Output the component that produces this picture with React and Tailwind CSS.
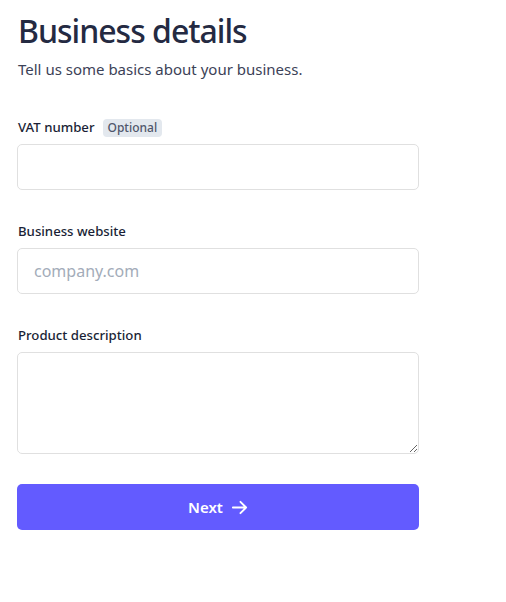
import React from "react";

export default function App() {
  return (
    <div className="min-h-[602px] w-[506px] bg-white pl-[17px] pt-[10px]" style={{ fontFamily: '"Noto Sans", "Open Sans", sans-serif' }}>
      <div className="w-[402px]">
        <h1 className="ml-[1px] text-[32px] font-medium leading-[42px] tracking-[-1px] text-[#242a42]">Business details</h1>
        <p className="ml-[1px] mt-[6px] text-[15px] leading-[22px] text-[#3c4257]">Tell us some basics about your business.</p>

        <div className="mt-[38px]">
          <div className="ml-[1px] flex h-[20px] items-center gap-[8px]">
            <span className="text-[13.2px] font-medium text-[#1a1f36]">VAT number</span>
            <span className="rounded-[4px] bg-[#e3e8ee] px-[5px] text-[12px] font-medium leading-[18px] text-[#4f566b]">Optional</span>
          </div>
          <input className="mt-[6px] block h-[46px] w-[402px] rounded-[5px] border border-[#e0e0e0] px-[16px] text-[16px] outline-none" />
        </div>

        <div className="mt-[31px]">
          <div className="ml-[1px] h-[20px] text-[13.2px] font-medium leading-[20px] text-[#1a1f36]">Business website</div>
          <input placeholder="company.com" className="mt-[7px] block h-[46px] w-[402px] rounded-[5px] border border-[#e0e0e0] px-[16px] text-[16px] outline-none placeholder:text-[#a3acb9]" />
        </div>

        <div className="mt-[31px]">
          <div className="ml-[1px] h-[20px] text-[13.2px] font-medium leading-[20px] text-[#1a1f36]">Product description</div>
          <textarea className="mt-[7px] block h-[102px] w-[402px] rounded-[5px] border border-[#e0e0e0] px-[16px] py-[12px] text-[16px] outline-none" />
        </div>

        <button className="mt-[30px] flex h-[46px] w-[402px] items-center justify-center gap-[8px] rounded-[5px] bg-[#635bff] text-[15px] font-semibold text-white">
          <span>Next</span>
          <svg width="17" height="17" viewBox="0 0 18 18" fill="none" stroke="white" strokeWidth="2" strokeLinecap="round" strokeLinejoin="round">
            <path d="M2 9h14M10 3l6 6-6 6" />
          </svg>
        </button>
      </div>
    </div>
  );
}
